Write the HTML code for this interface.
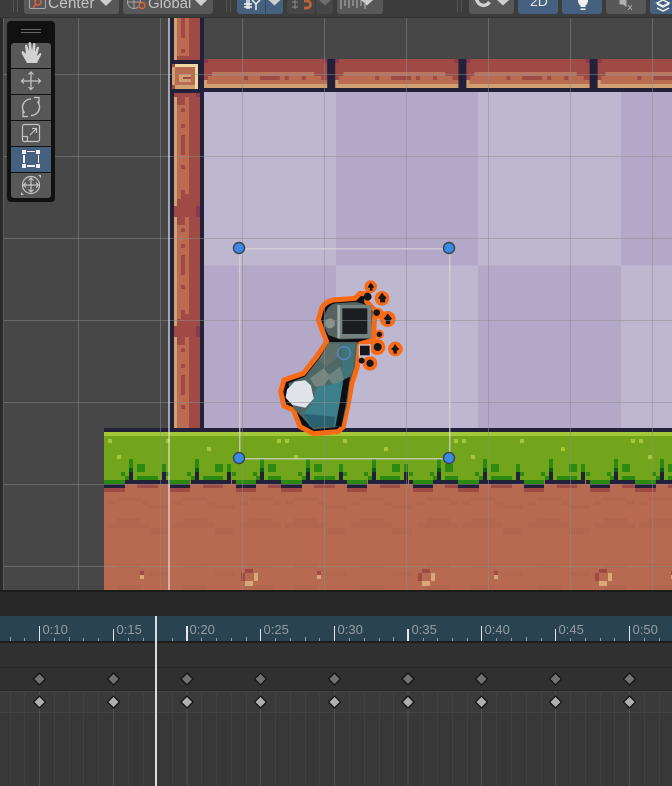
<!DOCTYPE html>
<html><head><meta charset="utf-8"><style>
html,body{margin:0;padding:0;background:#383838}
svg{display:block}
text{font-family:"Liberation Sans",sans-serif}
.c{shape-rendering:crispEdges}
</style></head><body>
<svg width="672" height="786" viewBox="0 0 672 786" xmlns="http://www.w3.org/2000/svg">
<defs>
<pattern id="g" patternUnits="userSpaceOnUse" x="104" y="428" width="177" height="162">
<g class="c">
<rect width="177" height="162" fill="#b76a50"/>
<rect y="4" width="177" height="4" fill="#a2c83a"/>
<rect y="8" width="177" height="44" fill="#72a41c"/>
<g fill="#b1664d">
<rect x="13" y="69" width="24" height="4"/><rect x="79" y="69" width="24" height="4"/><rect x="145" y="69" width="24" height="4"/>
<rect x="4" y="73" width="8" height="4"/><rect x="37" y="73" width="8" height="4"/><rect x="70" y="73" width="8" height="4"/><rect x="103" y="73" width="8" height="4"/><rect x="136" y="73" width="8" height="4"/><rect x="169" y="73" width="8" height="4"/>
<rect x="45" y="77" width="20" height="4"/><rect x="111" y="77" width="20" height="4"/>
<rect x="13" y="90" width="24" height="5"/><rect x="79" y="90" width="24" height="5"/><rect x="145" y="90" width="24" height="5"/>
<rect x="4" y="95" width="41" height="5"/><rect x="70" y="95" width="41" height="5"/><rect x="136" y="95" width="41" height="5"/>
<rect x="45" y="100" width="20" height="7"/><rect x="111" y="100" width="20" height="7"/>
<rect x="13" y="136" width="24" height="4"/><rect x="79" y="136" width="24" height="4"/><rect x="145" y="136" width="24" height="4"/>
<rect x="45" y="144" width="20" height="4"/><rect x="111" y="144" width="20" height="4"/>
<rect x="13" y="157" width="24" height="5"/><rect x="79" y="157" width="24" height="5"/><rect x="145" y="157" width="24" height="5"/>
</g>
<g>
<rect x="0" y="52" width="21" height="4" fill="#2c8a10"/><rect x="0" y="56" width="21" height="4" fill="#23203a"/><rect x="0" y="60" width="21" height="4" fill="#a04a46"/>
<rect x="66" y="52" width="20" height="4" fill="#2c8a10"/><rect x="66" y="56" width="20" height="4" fill="#23203a"/><rect x="66" y="60" width="20" height="4" fill="#a04a46"/>
<rect x="132" y="52" width="20" height="4" fill="#2c8a10"/><rect x="132" y="56" width="20" height="4" fill="#23203a"/><rect x="132" y="60" width="20" height="4" fill="#a04a46"/>
</g>
<g>
<rect x="33" y="48" width="21" height="4" fill="#2c8a10"/><rect x="33" y="52" width="21" height="4" fill="#23203a"/><rect x="33" y="56" width="21" height="4" fill="#a04a46"/>
<rect x="99" y="48" width="20" height="4" fill="#2c8a10"/><rect x="99" y="52" width="20" height="4" fill="#23203a"/><rect x="99" y="56" width="20" height="4" fill="#a04a46"/>
<rect x="164" y="48" width="13" height="4" fill="#2c8a10"/><rect x="164" y="52" width="13" height="4" fill="#23203a"/><rect x="164" y="56" width="13" height="4" fill="#a04a46"/>
</g>
<g fill="#2c8a10">
<rect x="25" y="31" width="4" height="9"/><rect x="91" y="31" width="4" height="9"/><rect x="156" y="31" width="4" height="9"/>
<rect x="17" y="44" width="4" height="4"/><rect x="21" y="48" width="4" height="4"/>
<rect x="83" y="44" width="4" height="4"/><rect x="87" y="48" width="4" height="4"/>
<rect x="149" y="44" width="4" height="4"/><rect x="152" y="48" width="4" height="4"/>
<rect x="33" y="36" width="8" height="8"/><rect x="111" y="36" width="8" height="8"/><rect x="164" y="36" width="8" height="8"/>
<rect x="58" y="36" width="4" height="8"/><rect x="123" y="36" width="4" height="8"/>
<rect x="62" y="44" width="4" height="4"/><rect x="128" y="44" width="4" height="4"/>
</g>
<g fill="#0e5a28"><rect x="25" y="40" width="4" height="4"/><rect x="91" y="40" width="4" height="4"/><rect x="156" y="40" width="4" height="4"/></g>
<g fill="#23203a">
<rect x="25" y="44" width="4" height="12"/><rect x="91" y="44" width="4" height="12"/><rect x="156" y="44" width="4" height="12"/>
<rect x="21" y="52" width="12" height="4"/><rect x="87" y="52" width="12" height="4"/><rect x="152" y="52" width="12" height="4"/>
<rect x="54" y="52" width="4" height="4"/><rect x="58" y="44" width="4" height="12"/><rect x="62" y="52" width="4" height="4"/>
<rect x="119" y="52" width="4" height="4"/><rect x="123" y="44" width="4" height="12"/><rect x="128" y="52" width="4" height="4"/>
</g>
<g fill="#a2c83a">
<rect x="4" y="11" width="4" height="4"/><rect x="13" y="27" width="4" height="4"/><rect x="62" y="11" width="4" height="4"/><rect x="103" y="19" width="4" height="4"/><rect x="173" y="11" width="4" height="4"/>
</g>
<rect x="36" y="143" width="4" height="4" fill="#a04a46"/><rect x="36" y="147" width="4" height="4" fill="#d8a878"/>
<rect x="141" y="141" width="8" height="4" fill="#a04a46"/><rect x="137" y="145" width="4" height="8" fill="#a04a46"/><rect x="150" y="145" width="4" height="8" fill="#d8a878"/><rect x="141" y="153" width="8" height="5" fill="#d8a878"/>
</g>
</pattern>
<pattern id="col" patternUnits="userSpaceOnUse" x="174" y="93" width="26" height="120">
<g class="c">
<rect width="26" height="120" fill="#a04a46"/>
<rect y="4" width="3" height="109" fill="#d0a070"/>
<rect x="3" y="4" width="12" height="102" fill="#b96c52"/>
<rect x="22" y="0" width="4" height="4" fill="#8a3a4e"/>
<rect x="3" y="4" width="8" height="8" fill="#a04a46"/>
<rect x="7" y="15" width="4" height="4" fill="#a04a46"/>
<rect x="7" y="31" width="4" height="4" fill="#a04a46"/><rect x="7" y="42" width="4" height="20" fill="#a04a46"/>
<rect x="7" y="72" width="4" height="4" fill="#a04a46"/>
<rect x="7" y="97" width="4" height="9" fill="#a04a46"/><rect x="11" y="101" width="4" height="5" fill="#a04a46"/>
<rect x="0" y="113" width="26" height="7" fill="#a04a46"/><rect x="22" y="113" width="4" height="7" fill="#8a3a4e"/>
<rect x="3" y="106" width="23" height="7" fill="#a04a46"/>
</g>
</pattern>
<pattern id="brick" patternUnits="userSpaceOnUse" x="204" y="59" width="131.2" height="33">
<g class="c">
<rect width="123" height="29" fill="#a04a46"/>
<rect x="123" width="9" height="33" fill="#23203a"/>
<rect y="29" width="132" height="4" fill="#23203a"/>
<rect x="8" y="13" width="102" height="4" fill="#bb7660"/>
<rect x="4" y="17" width="113" height="4" fill="#b96c52"/>
<rect x="0" y="21" width="123" height="4" fill="#b96c52"/>
<rect x="0" y="25" width="123" height="4" fill="#d0a070"/>
<rect x="0" y="21" width="3" height="8" fill="#d0a070"/>
<rect x="40" y="17" width="4" height="4" fill="#a04a46"/><rect x="56" y="17" width="20" height="4" fill="#a04a46"/><rect x="81" y="17" width="4" height="4" fill="#a04a46"/><rect x="98" y="17" width="4" height="4" fill="#a04a46"/>
<rect x="0" y="0" width="4" height="4" fill="#8a3a4e"/><rect x="119" y="0" width="4" height="4" fill="#8a3a4e"/>
</g>
</pattern>
</defs>

<!-- scene -->
<rect class="c" width="672" height="592" fill="#474747"/>
<rect class="c" width="3" height="592" fill="#2b2b2b"/>
<rect class="c" x="3" width="1" height="592" fill="#5e5e5e"/>

<!-- wall backdrop -->
<g class="c">
<rect x="204" y="92" width="468" height="336" fill="#bdb8d0"/>
<rect x="336" y="92" width="142" height="173.500" fill="#b3a8c8"/>
<rect x="621" y="92" width="51" height="173.500" fill="#b3a8c8"/>
<rect x="204" y="265.500" width="132" height="163" fill="#b3a8c8"/>
<rect x="478" y="265.500" width="143" height="163" fill="#b3a8c8"/>
<rect x="170" y="18" width="34" height="410" fill="#23203a"/>
<rect x="174" y="18" width="26" height="42" fill="#a04a46"/>
<rect x="174" y="18" width="3" height="42" fill="#d0a070"/>
<rect x="177" y="18" width="12" height="38" fill="#b96c52"/>
<rect x="181" y="18" width="4" height="20" fill="#a04a46"/>
<rect x="181" y="49" width="4" height="4" fill="#a04a46"/>
<rect x="174" y="93" width="26" height="335" fill="url(#col)"/>
<rect x="204" y="59" width="468" height="33" fill="url(#brick)"/>
<rect x="172" y="64" width="26" height="25" fill="#a04a46"/>
<rect x="172" y="64" width="26" height="3" fill="#f0d8a0"/>
<rect x="195" y="64" width="3" height="25" fill="#f0d8a0"/>
<rect x="172" y="67" width="3" height="18" fill="#d0a070"/>
<rect x="175" y="85" width="20" height="4" fill="#d0a070"/>
<rect x="175" y="67" width="20" height="18" fill="#b96c52"/>
<rect x="179" y="74" width="12" height="8" fill="#d0a070"/>
<rect x="183" y="77" width="8" height="2" fill="#a04a46"/>
<rect x="172" y="64" width="3" height="3" fill="#a04a46"/>
</g>

<!-- ground -->
<rect class="c" x="104" y="428" width="568" height="4" fill="#23203a"/>
<rect class="c" x="104" y="432" width="568" height="158" fill="url(#g)"/>

<!-- character -->
<g transform="translate(260 270) scale(.33333)">
<g fill="#fb6a12">
<circle cx="332" cy="50" r="19"/><circle cx="366" cy="85" r="22"/><circle cx="383" cy="147" r="24"/><circle cx="352" cy="231" r="24"/><circle cx="406" cy="237" r="22"/><circle cx="330" cy="280" r="22"/><circle cx="355" cy="130" r="16"/><circle cx="358" cy="193" r="14"/>
</g>
<path d="M185 115Q195 95 220 90L285 85L300 70L320 72L320 95L345 120L340 210L300 222L290 240L292 290L276 340L265 400L250 470L235 485L160 491L120 470L100 420L72 408L62 365L72 330L130 310L170 260L200 215L190 190L175 150Z" fill="#0d0f14" stroke="#fb6a12" stroke-width="15" stroke-linejoin="round"/>
<!-- head -->
<path d="M192 140Q200 108 225 100L290 96L330 108L330 205L240 208L205 195L190 165Z" fill="#55625f"/>
<rect x="232" y="105" width="103" height="100" fill="#76827f"/>
<rect x="232" y="105" width="8" height="100" fill="#a0aba8"/>
<rect x="247" y="115" width="75" height="77" fill="#1b1e21"/>
<circle cx="210" cy="160" r="15" fill="#87938f"/>
<!-- neck and body -->
<path d="M208 216L292 216L285 290L270 330L262 400L245 470L160 478L125 440L100 415L85 340L135 320L178 265Z" fill="#4d6764"/>
<path d="M245 222L286 222L278 300L250 335L222 340L248 290Z" fill="#3f7478"/>
<path d="M205 222L240 222L232 262L200 290L178 272Z" fill="#5f706c"/>
<path d="M150 325L190 295L212 318L190 348L165 350Z" fill="#76857f"/>
<path d="M200 320L240 290L252 330L220 345Z" fill="#6b8480"/>
<path d="M170 352L250 335L240 400L228 470L150 470L130 432L158 395Z" fill="#3a7f8a"/>
<path d="M130 432L225 440L222 470L155 472Z" fill="#2a6170"/>
<path d="M250 330L270 320L258 400L244 470L226 470L240 395Z" fill="#0d0f14"/>
<path d="M84 360L105 338L135 334L150 348L158 385L135 410L98 402L80 382Z" fill="#e0e4ea" stroke="#e0e4ea" stroke-width="6" stroke-linejoin="round"/>
<circle cx="252" cy="249" r="19" fill="none" stroke="#5a88c8" stroke-width="5" opacity=".8"/>
<g fill="#14161b">
<path d="M332 38l7 8 4 6-6 2 1 8h-9l1-8-7-2 3-6z"/>
<path d="M366 68l7 9 7 6-5 6 1 8h-16l1-8-7-5 6-7z"/>
<path d="M383 130l7 9 6 7-6 6 1 10h-14l1-10-7-6 6-7z"/>
<path d="M405 222l6 9 7 6-7 5-1 9h-9l-1-9-7-5 7-6z"/>
<circle cx="353" cy="231" r="12"/><circle cx="358" cy="193" r="8"/><circle cx="330" cy="280" r="11"/><circle cx="305" cy="272" r="9"/><circle cx="350" cy="128" r="10"/><circle cx="323" cy="80" r="12"/>
</g>
<rect x="298" y="225" width="33" height="33" fill="#14161b" stroke="#c8c4d6" stroke-width="4"/>
</g>

<!-- grid -->
<g class="c" stroke="#8c8c8c" stroke-opacity=".5" stroke-width="1" fill="none">
<path d="M4 74.500H672M4 156.500H672M4 238.500H672M4 320.500H672M4 402.500H672M4 484.500H672M4 566.500H672"/>
<path d="M78.500 18V590M160.500 18V590M242.500 18V590M324.500 18V590M406.500 18V590M488.500 18V590M570.500 18V590M652.500 18V590"/>
</g>
<rect class="c" x="168" y="18" width="2" height="572" fill="#e0e0e0" fill-opacity=".62"/>

<!-- rect tool -->
<g fill="none" stroke="#d6d6d6" stroke-opacity=".75" stroke-width="1.500" class="c">
<path d="M239.500 248.500H449.500V458.500H239.500Z"/>
</g>
<g stroke="#3c4650" stroke-width="1.500">
<circle cx="239" cy="248" r="5.500" fill="#3b8ae6"/><circle cx="449" cy="248" r="5.500" fill="#3b8ae6"/><circle cx="239" cy="458" r="5.500" fill="#3b8ae6"/><circle cx="449" cy="458" r="5.500" fill="#3b8ae6"/>
</g>

<!-- palette -->
<rect x="7" y="21" width="48" height="181" rx="4" fill="#111"/>
<path class="c" d="M21 29h20v1H21zM21 32h20v1H21z" fill="#666"/>
<g fill="#585858">
<path d="M11 46a3 3 0 0 1 3-3h34a3 3 0 0 1 3 3v22H11z"/>
<rect class="c" x="11" y="69" width="40" height="25"/>
<rect class="c" x="11" y="95" width="40" height="25"/>
<rect class="c" x="11" y="121" width="40" height="25"/>
<path d="M11 173h40v22a3 3 0 0 1-3 3H14a3 3 0 0 1-3-3z"/>
</g>
<rect class="c" x="11" y="147" width="40" height="25" fill="#46607f"/>
<path d="M27 63l-5-9q-1-3 1-3l3 3-1-8q0-2 2-1l2 6-.5-8q1-2 2.500 0l1 8 1-7q1.500-2 2.500 0l-.5 8 2-5q2-1 2 1l-2 8 3-3q2 0 1 2l-4 8z" fill="#d2d2d2"/>
<g fill="none" stroke="#c4c4c4" stroke-width="1.200">
<path d="M31 72v17M22 81h18M28.500 74.500l2.500-2.500 2.500 2.500M28.500 87l2.500 2.500 2.500-2.500M24 78.500l-2.500 2.500 2.500 2.500M38 78.500l2.500 2.500-2.500 2.500"/>
<path d="M31 99a8.500 8.500 0 0 0-6.500 14M31 115.500a8.500 8.500 0 0 0 6.500-14" stroke-width="1.500"/>
<path d="M23 111.500v5h5M39 103v-5.500h-5" stroke-width="1.200"/>
<rect x="22.500" y="124.500" width="17" height="17" rx="2"/>
<path d="M22.500 136.500h5v5M30 135l6-6M32 128.500h4.500v4.500"/>
<circle cx="31" cy="185" r="8.500"/><path d="M31 178v14M24 185h14"/>
<path d="M28.500 180.500l2.500-2.500 2.500 2.500M28.500 189.500l2.500 2.500 2.500-2.500M26 182.500l-2.500 2.500 2.500 2.500M36 182.500l2.500 2.500-2.500 2.500"/>
</g>
<path d="M38 175h3v3zM21 195v-3l3 3z" fill="#c4c4c4"/>
<g class="c" fill="#f0f0f0">
<rect x="22" y="150" width="4" height="4"/><rect x="36" y="150" width="4" height="4"/><rect x="22" y="164" width="4" height="4"/><rect x="36" y="164" width="4" height="4"/>
<rect x="27" y="151" width="8" height="1"/><rect x="27" y="165" width="8" height="2"/><rect x="23" y="155" width="2" height="8"/><rect x="38" y="155" width="1" height="8"/>
</g>

<!-- top toolbar -->
<rect class="c" width="672" height="18" fill="#3c3c3c"/>
<rect class="c" y="17" width="672" height="1" fill="#333"/>
<g fill="#585858">
<rect x="24" y="-4" width="95" height="18" rx="3"/>
<rect x="123" y="-4" width="90" height="18" rx="3"/>
<rect x="287" y="-4" width="28" height="18" rx="3" fill="#464646"/>
<rect x="316" y="-4" width="17" height="18" rx="3" fill="#464646"/>
<rect x="337" y="-4" width="46" height="18" rx="3"/>
<rect x="469" y="-4" width="45" height="18" rx="3"/>
<rect x="606" y="-4" width="40" height="18" rx="3"/>
</g>
<g fill="#46607f">
<rect x="237" y="-4" width="46" height="18" rx="3"/>
<rect x="518" y="-4" width="40" height="18" rx="3"/>
<rect x="562" y="-4" width="40" height="18" rx="3"/>
<rect x="650" y="-4" width="30" height="18" rx="3"/>
</g>
<rect class="c" x="265" y="0" width="1" height="14" fill="#33465c"/>
<g class="c" fill="#555"><rect x="13" y="0" width="1" height="12"/><rect x="17" y="0" width="1" height="12"/><rect x="226" y="0" width="1" height="12"/><rect x="230" y="0" width="1" height="12"/><rect x="457" y="0" width="1" height="12"/><rect x="461" y="0" width="1" height="12"/></g>
<text x="48" y="8" font-size="15.500" fill="#c4c4c4">Center</text>
<text x="148" y="8" font-size="15" fill="#c4c4c4">Global</text>
<text x="530" y="6" font-size="14" fill="#e4e4e4">2D</text>
<path d="M100 0h12l-6 6zM195 0h12l-6 6zM268.500 0h12l-6 5.500zM361 0h12l-6 5.500zM497 0h12l-6 5.500z" fill="#cfcfcf"/>
<path d="M319 0h12l-6 5.500z" fill="#6e6e6e"/>
<rect x="29.500" y="-4" width="16" height="12.500" rx="1.500" fill="none" stroke="#a8a8a8"/>
<circle cx="38" cy="2" r="3" fill="none" stroke="#e0603c" stroke-width="1.500"/><path d="M36 4l-3 4" stroke="#e0603c" stroke-width="1.500"/>
<circle cx="134" cy="2" r="6.500" fill="none" stroke="#a8a8a8"/><path d="M128 2h12M134-4v12" stroke="#a8a8a8"/>
<circle cx="142" cy="5.500" r="3" fill="#585858" stroke="#e0603c" stroke-width="1.500"/>
<g fill="none" stroke="#f0f0f0" stroke-width="1.500"><path d="M244 4h8M244 7h8M247 0v9M249 0v9M252 0l4 4 4-4M256 4v6"/></g>
<g fill="none"><path d="M304 1h3a3.500 3.500 0 0 1 0 7h-3" stroke="#b8623c" stroke-width="3"/><path d="M292 2h6M292 7h6M295 0v9" stroke="#8a8a8a"/></g>
<path d="M341 -1v10M341 -1h24M345 0v6M349 0v8M353 0v6M357 0v8M361 0v6M365 -1v10" stroke="#b8b8b8" fill="none"/>
<path d="M476.500 -1a7.500 9 0 0 0 13 3" fill="none" stroke="#d0d0d0" stroke-width="3.500"/>
<path d="M578 0h10q0 4-2.500 5.500v1.500h-5v-1.500q-2.500-1.500-2.500-5.500zM580.500 8.500h5v1.500h-5z" fill="#f0f0f0"/>
<path d="M620 0h3l3-2v8l-3-2h-3zM628 5l4 5M632 5l-4 5" stroke="#b0b0b0" fill="#b0b0b0" stroke-width="1"/>
<path d="M657 4l6 3 6-3M657 8l6 3 6-3M663 0l6 3-6 3-6-3z" fill="none" stroke="#f0f0f0" stroke-width="1.500"/>

<!-- timeline -->
<g class="c">
<rect y="590" width="672" height="2" fill="#1c1c1c"/>
<rect y="592" width="672" height="24" fill="#282828"/>
<rect y="616" width="672" height="25" fill="#2a4350"/>
<rect y="641" width="672" height="2" fill="#1e1e1e"/>
<rect y="643" width="672" height="24" fill="#303030"/>
<rect y="667" width="672" height="1" fill="#262626"/>
<rect y="668" width="672" height="22" fill="#303030"/>
<rect y="690" width="672" height="1" fill="#262626"/>
<rect y="691" width="672" height="1" fill="#444"/>
<rect y="692" width="672" height="20" fill="#3a3a3a"/>
<rect y="712" width="672" height="1" fill="#444"/>
<rect y="713" width="672" height="73" fill="#383838"/>
</g>
<path class="c" fill="none" stroke="#414141" d="M10.500 691V786M24.500 691V786M54.500 691V786M69.500 691V786M83.500 691V786M98.500 691V786M128.500 691V786M143.500 691V786M172.500 691V786M201.500 691V786M216.500 691V786M231.500 691V786M246.500 691V786M275.500 691V786M290.500 691V786M305.500 691V786M319.500 691V786M349.500 691V786M364.500 691V786M379.500 691V786M393.500 691V786M423.500 691V786M437.500 691V786M452.500 691V786M467.500 691V786M496.500 691V786M511.500 691V786M526.500 691V786M541.500 691V786M570.500 691V786M585.500 691V786M600.500 691V786M614.500 691V786M644.500 691V786M659.500 691V786"/>
<path class="c" fill="none" stroke="#505050" d="M39.500 691V786M113.500 691V786M187 691V786M260.500 691V786M334.500 691V786M408 691V786M481.500 691V786M555.500 691V786M629.500 691V786"/>
<path class="c" fill="none" stroke="#8f9ea6" d="M10.500 637V641M24.500 638V641M54.500 638V641M69.500 637V641M83.500 638V641M98.500 638V641M128.500 638V641M143.500 638V641M172.500 638V641M201.500 638V641M216.500 638V641M231.500 638V641M246.500 637V641M275.500 638V641M290.500 638V641M305.500 637V641M319.500 638V641M349.500 638V641M364.500 638V641M379.500 638V641M393.500 637V641M423.500 638V641M437.500 638V641M452.500 638V641M467.500 638V641M496.500 638V641M511.500 638V641M526.500 637V641M541.500 638V641M570.500 638V641M585.500 638V641M600.500 638V641M614.500 638V641M644.500 638V641M659.500 638V641"/>
<path class="c" fill="none" stroke="#e4e8ea" d="M39.500 626V641M113.500 629V641M260.500 629V641M481.500 626V641M555.500 629V641M629.500 626V641"/>
<rect class="c" x="186" y="626" width="2" height="15" fill="#e4e8ea"/>
<rect class="c" x="407" y="629" width="2" height="12" fill="#e4e8ea"/>
<rect class="c" x="334" y="626" width="1" height="15" fill="#e4e8ea"/>
<g font-size="13" fill="#939da1">
<text x="42.500" y="634">0:10</text><text x="116.500" y="634">0:15</text><text x="189.500" y="634">0:20</text><text x="263.500" y="634">0:25</text><text x="337.500" y="634">0:30</text><text x="411.500" y="634">0:35</text><text x="484.500" y="634">0:40</text><text x="558.500" y="634">0:45</text><text x="632.500" y="634">0:50</text>
</g>
<g stroke="#151515" stroke-width="1.300" fill="#727272">
<path d="M39.500 673l6 6-6 6-6-6zM113.500 673l6 6-6 6-6-6zM187 673l6 6-6 6-6-6zM260.500 673l6 6-6 6-6-6zM334.500 673l6 6-6 6-6-6zM408 673l6 6-6 6-6-6zM481.500 673l6 6-6 6-6-6zM555.500 673l6 6-6 6-6-6zM629.500 673l6 6-6 6-6-6z"/>
<path fill="#b0b0b0" d="M39.500 696l6 6-6 6-6-6zM113.500 696l6 6-6 6-6-6zM187 696l6 6-6 6-6-6zM260.500 696l6 6-6 6-6-6zM334.500 696l6 6-6 6-6-6zM408 696l6 6-6 6-6-6zM481.500 696l6 6-6 6-6-6zM555.500 696l6 6-6 6-6-6zM629.500 696l6 6-6 6-6-6z"/>
</g>
<rect class="c" x="155" y="616" width="2" height="170" fill="#dcdcdc"/>
</svg>
</body></html>
